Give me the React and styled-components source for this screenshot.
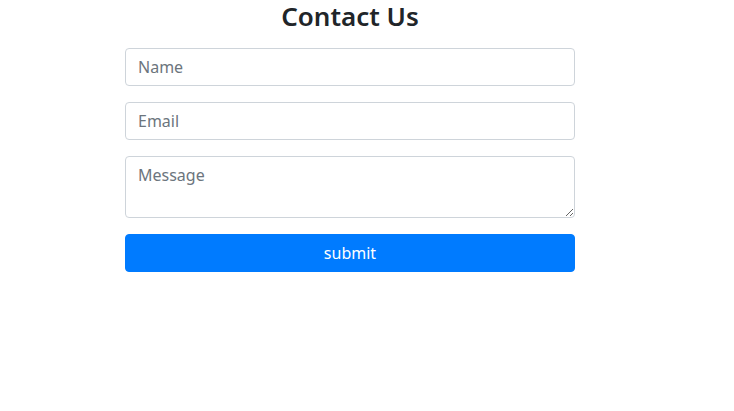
import React from 'react';
import styled, { createGlobalStyle } from 'styled-components';

const GlobalStyle = createGlobalStyle`
  body {
    margin: 0;
    background: #fff;
    font-family: "Noto Sans", "Open Sans", sans-serif;
    color: #212529;
  }
  *, *::before, *::after {
    box-sizing: border-box;
  }
`;

const Wrapper = styled.section`
  width: 450px;
  margin-left: 125px;
  display: flex;
  flex-direction: column;
`;

const Title = styled.h3`
  margin: 0 0 16px;
  text-align: center;
  font-size: 26px;
  font-weight: 600;
  line-height: 32px;
  color: #212529;
`;

const Form = styled.form`
  display: flex;
  flex-direction: column;
  gap: 16px;
`;

const Field = styled.input`
  display: block;
  width: 100%;
  height: ${({ rows }) => (rows ? 62 : 38)}px;
  padding: 6px 12px;
  font-family: inherit;
  font-size: 16px;
  line-height: 24px;
  color: #495057;
  background: #fff;
  border: 1px solid #ced4da;
  border-radius: 4px;
  resize: vertical;
  &::placeholder {
    color: #6c757d;
  }
`;

const Button = styled.button`
  display: block;
  width: 100%;
  height: 38px;
  padding: 6px 12px;
  font-family: inherit;
  font-size: 16px;
  line-height: 24px;
  color: #fff;
  background: #007bff;
  border: 1px solid #007bff;
  border-radius: 4px;
  cursor: pointer;
`;

const App = () => (
  <>
    <GlobalStyle />
    <Wrapper>
      <Title>Contact Us</Title>
      <Form onSubmit={e => e.preventDefault()}>
        <Field type="text" placeholder="Name" />
        <Field type="email" placeholder="Email" />
        <Field as="textarea" rows={2} placeholder="Message" />
        <Button type="submit">submit</Button>
      </Form>
    </Wrapper>
  </>
);

export default App;
